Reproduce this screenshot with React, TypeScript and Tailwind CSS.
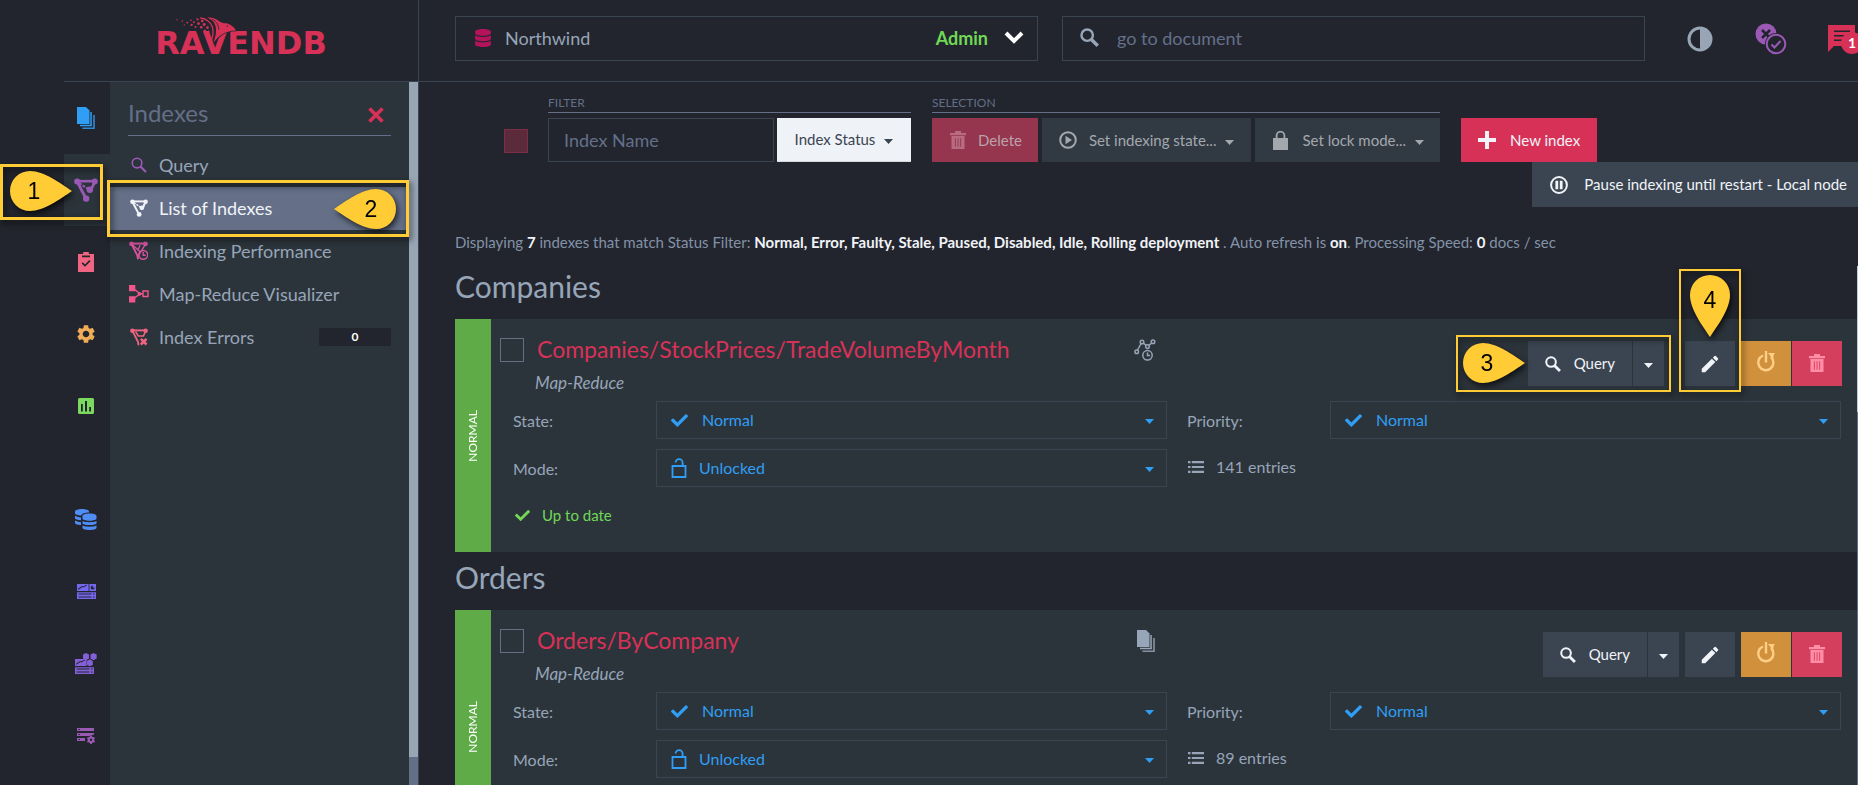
import { useState, ReactNode } from "react";
import { FaCheck, FaDatabase } from "react-icons/fa";
import { MdEdit, MdSettings } from "react-icons/md";

type IconProps = { className?: string };

type IndexInfo = {
  name: string;
  collection: string;
  entries: number;
  timeSeries: boolean;
  callouts: boolean;
};

const INDEXES: IndexInfo[] = [
  { name: "Companies/StockPrices/TradeVolumeByMonth", collection: "Companies", entries: 141, timeSeries: true,  callouts: true  },
  { name: "Orders/ByCompany",                         collection: "Orders",    entries: 89,  timeSeries: false, callouts: false },
];

/* ---------- icons ---------- */

function DocumentsIcon({ className }: IconProps) {
  return (
    <svg viewBox="0 0 18 22" className={className} fill="currentColor" aria-hidden="true">
      <path d="M0 0h9l3.5 3.5V17H0z" />
      <path d="M13.3 5h1.5v14.2H3V17.8h10.3z" />
      <path d="M16.2 8h1.6v14H5.4v-1.4h10.8z" opacity=".85" />
    </svg>
  );
}

function SearchIcon({ className, thin }: IconProps & { thin?: boolean }) {
  return (
    <svg viewBox="0 0 18 18" className={className} fill="none" stroke="currentColor" aria-hidden="true">
      <circle cx="6.800" cy="6.800" r="5.400" strokeWidth={thin ? 1.8 : 2.3} />
      <path d="m10.600 10.600 6.200 6.200" strokeWidth={thin ? 2.4 : 3.2} />
    </svg>
  );
}

function IndexIcon({ className, badge }: IconProps & { badge?: "clock" | "error" }) {
  return (
    <svg viewBox="0 0 24 24" className={className} fill="none" stroke="currentColor" aria-hidden="true">
      <g fill="currentColor" stroke="none">
        <circle cx="3.2" cy="3.6" r="3" />
        <circle cx="20.8" cy="3.6" r="3" />
        {!badge && <circle cx="12.2" cy="20.6" r="3.2" />}
        {!badge && <circle cx="15.8" cy="11.8" r="3.2" />}
      </g>
      <path d="M3 3.2h18" strokeWidth="2.6" />
      {badge ? (
        <path d="M3.6 4.5 10.5 18l1 5" strokeWidth="2.4" />
      ) : (
        <path d="M3.6 4.5 12 20.5M20.400 4.500 17 12" strokeWidth="2.8" />
      )}
      {!badge && <path d="m5 5 10 6.5" strokeWidth="2" strokeDasharray="3 1.2" />}
      {badge === "clock" && (
        <>
          <path d="m4 4.5 10 9M20.4 4.5 10.5 21M14 5l-3 7" strokeWidth="1.7" />
          <circle cx="18" cy="17.5" r="5.6" strokeWidth="1.8" />
          <path d="M18 14v4h3" strokeWidth="1.6" />
        </>
      )}
      {badge === "error" && (
        <>
          <path d="M20.4 5 18 10.5h-7L7.5 5" strokeWidth="2" />
          <path d="m14.5 14.5 7.5 7.5m0-7.5-7.5 7.5" strokeWidth="3.4" />
        </>
      )}
    </svg>
  );
}

function MapReduceIcon({ className }: IconProps) {
  return (
    <svg viewBox="0 0 20 18" className={className} aria-hidden="true">
      <path fill="currentColor" d="M0 0h6.3v6.3H0zM0 11.2h6.3v6.3H0z" />
      <g fill="none" stroke="currentColor" strokeWidth="1.4">
        <path d="m5 4 6 4.8L5 13.500M11 8.800h2.800" />
        <circle cx="10.500" cy="8.800" r="1.200" />
        <path d="M14 6h5v5.500h-5z" />
      </g>
    </svg>
  );
}

function TasksIcon({ className }: IconProps) {
  return (
    <svg viewBox="0 0 16 20" className={className} aria-hidden="true">
      <path fill="currentColor" fillRule="evenodd" d="M0 2h5a3 3 0 0 1 6 0h5v18H0zM4 3.500v1.800h8V3.500zM3.600 11.400l1.200-1.200 2.200 2.200 4.300-4.300 1.200 1.200L7 14.800z" />
    </svg>
  );
}

function StatsIcon({ className }: IconProps) {
  return (
    <svg viewBox="0 0 16 16" className={className} aria-hidden="true">
      <path fill="currentColor" fillRule="evenodd" d="M1.500 0h13A1.500 1.500 0 0 1 16 1.500v13a1.500 1.500 0 0 1-1.500 1.500h-13A1.500 1.500 0 0 1 0 14.500v-13A1.500 1.500 0 0 1 1.500 0zM3 6v7.500h1.800V6zM7 3v10.500h2V3zM11.200 9v4.500H13V9z" />
    </svg>
  );
}

function DatabasesIcon({ className }: IconProps) {
  return (
    <svg viewBox="0 0 22 21" className={className} aria-hidden="true">
      <g fill="currentColor">
        <path d="M0 2.500C0 1 3.200 0 7 0s7 1 7 2.500V3.500C10 3.500 6.800 4.600 6.300 6.500 3 6.400 0 5.600 0 4.300zM0 6.800c1.200.9 3.500 1.500 6 1.600v2.800C2.600 11 0 10.300 0 9.300zM0 11.600c1.200.9 3.500 1.500 6 1.600V16C2.600 15.900 0 15.200 0 14z" />
        <path d="M7.500 7C7.500 5.500 10.500 4.600 14.500 4.600s7 .9 7 2.400v2.600c0 1.300-3 2.200-7 2.200s-7-.9-7-2.200zM7.500 12c1.400.8 4 1.200 7 1.200s5.600-.4 7-1.200v2.200c0 1.100-3 1.900-7 1.900s-7-.8-7-1.900zM7.500 16.500c1.400.8 4 1.200 7 1.200s5.600-.4 7-1.200v2.200c0 1.300-3 2.300-7 2.300s-7-1-7-2.300z" />
      </g>
    </svg>
  );
}

function DashboardIcon({ className, cluster }: IconProps & { cluster?: boolean }) {
  return (
    <svg viewBox={cluster ? "0 -6 22 21" : "0 0 19 15"} className={className} aria-hidden="true">
      <path fill="currentColor" fillRule="evenodd" d="M0 0h11.600v7H0zM1.200 5.700l3.800-2.500h2l3-2v-.6L6.600 2.300h-2L1 4.800zM0 8.200h19V15H0zM1.500 9.500v1.100h13V9.500zM16 9.500v1.100h1.700V9.500zM1.500 12.400v1.200h13v-1.200zM16 12.400v1.200h1.700v-1.200z" />
      {cluster ? (
        <path fill="currentColor" d="m11-6 3 1.500v4l-3 1.700L8-.5v-4zM18.500-6l3.200 1.500v4l-3.200 1.700-3-1.700v-4zM14.800.300l3 1.700v4l-3 1.300-2.800-1.300V2z" />
      ) : (
        <path fill="currentColor" fillRule="evenodd" d="M12.400 0H19v7h-6.600zM15.700 1.500a2 2 0 1 0 2 2h-2z" />
      )}
    </svg>
  );
}

function ServerIcon({ className }: IconProps) {
  return (
    <svg viewBox="0 0 18 17" className={className} aria-hidden="true">
      <path fill="currentColor" fillRule="evenodd" d="M0 1h17v3H0zM1.500 2v1H3V2zM0 6h17v1.500L12 9H0zM1.500 7v1H3V7zM0 11h8v3H0zM1.500 12v1H3v-1z" />
      <circle cx="14" cy="12.800" r="2.200" fill="none" stroke="currentColor" strokeWidth="2" />
      <path stroke="currentColor" strokeWidth="1.800" strokeDasharray="1.800 4.800" d="M14 8.600v8.400M10.400 10.700l7.200 4.200M10.400 14.900l7.200-4.200" />
    </svg>
  );
}

function TrashIcon({ className }: IconProps) {
  return (
    <svg viewBox="0 0 16 18" className={className} aria-hidden="true">
      <path fill="currentColor" d="M5 0h6v2h5v2.200H0V2h5z" />
      <path fill="currentColor" fillRule="evenodd" d="M1.500 5h13v13h-13zM4.900 7.200v8.600h.9V7.200zM7.600 7.200v8.600h.9V7.200zM10.200 7.200v8.600h.9V7.200z" />
    </svg>
  );
}

function PlayIcon({ className }: IconProps) {
  return (
    <svg viewBox="0 0 18 18" className={className} aria-hidden="true">
      <circle cx="9" cy="9" r="7.800" fill="none" stroke="currentColor" strokeWidth="2" />
      <path fill="currentColor" d="M6.500 4.800 13 9l-6.500 4.200z" />
    </svg>
  );
}

function PauseIcon({ className }: IconProps) {
  return (
    <svg viewBox="0 0 18 18" className={className} aria-hidden="true">
      <circle cx="9" cy="9" r="7.900" fill="none" stroke="currentColor" strokeWidth="2" />
      <path fill="currentColor" d="M5.400 4.800h2.800v8.400H5.400zM9.800 4.800h2.800v8.400H9.800z" />
    </svg>
  );
}

function LockIcon({ className, open }: IconProps & { open?: boolean }) {
  return open ? (
    <svg viewBox="0 0 16 20" className={className} fill="none" stroke="currentColor" strokeWidth="1.800" aria-hidden="true">
      <path d="M1.500 8h13v11h-13z" />
      <path d="M4.600 4.600a3.500 3.500 0 0 1 7 0V8" />
    </svg>
  ) : (
    <svg viewBox="0 0 15 19" className={className} aria-hidden="true">
      <path fill="currentColor" d="M0 7h15v12H0z" />
      <path d="M3.600 8V4.600a3.900 3.900 0 0 1 7.800 0V8" fill="none" stroke="currentColor" strokeWidth="1.800" />
    </svg>
  );
}

function PowerIcon({ className }: IconProps) {
  return (
    <svg viewBox="0 0 20 21" className={className} fill="none" stroke="currentColor" aria-hidden="true">
      <path d="M7 4.500a7.600 7.600 0 1 0 8 1.500" strokeWidth="2.400" />
      <path d="M10 0v11.500" strokeWidth="2.400" />
      <path d="M12 2h7l-1.200 1.800-.8 4.700z" fill="currentColor" stroke="none" />
    </svg>
  );
}

function TimeSeriesIcon({ className }: IconProps) {
  return (
    <svg viewBox="0 0 22 22" className={className} fill="none" stroke="currentColor" strokeWidth="1.500" aria-hidden="true">
      <circle cx="2.700" cy="12.800" r="1.800" />
      <circle cx="8" cy="3" r="1.800" />
      <circle cx="13.500" cy="7.600" r="1.800" />
      <circle cx="19" cy="2.700" r="1.800" />
      <path d="m3.500 11 3.700-6.500M9.400 4.200l2.700 2.200M14.800 6.300l3-2.300" />
      <circle cx="13.500" cy="16.300" r="4.700" />
      <path d="M13.500 13.500v3h2.500" />
    </svg>
  );
}

function ListIcon({ className }: IconProps) {
  return (
    <svg viewBox="0 0 16 12" className={className} fill="currentColor" aria-hidden="true">
      <path d="M0 0h2.500v2.200H0zM3.800 0H16v2.200H3.800zM0 4.900h2.500v2.200H0zM3.800 4.900H16v2.200H3.800zM0 9.800h2.500V12H0zM3.800 9.800H16V12H3.800z" />
    </svg>
  );
}

function ContrastIcon({ className }: IconProps) {
  return (
    <svg viewBox="0 0 26 26" className={className} aria-hidden="true">
      <circle cx="13" cy="13" r="11" fill="none" stroke="currentColor" strokeWidth="3" />
      <path fill="currentColor" d="M13 2a11 11 0 0 1 0 22z" />
    </svg>
  );
}

function TasksStatusIcon({ className }: IconProps) {
  return (
    <svg viewBox="0 0 32 32" className={className} fill="none" aria-hidden="true">
      <circle cx="11" cy="11" r="10.500" fill="currentColor" />
      <path d="m7 7 8 8m0-8-8 8" stroke="#22252d" strokeWidth="2.500" />
      <circle cx="21" cy="21" r="11" fill="#22252d" />
      <circle cx="21" cy="21" r="9.300" stroke="currentColor" strokeWidth="2" />
      <path d="m16.500 21.500 3 3 6-6.500" stroke="currentColor" strokeWidth="2" />
    </svg>
  );
}

function MessageIcon({ className }: IconProps) {
  return (
    <svg viewBox="0 0 27 27" className={className} aria-hidden="true">
      <path fill="currentColor" fillRule="evenodd" d="M0 0h27v21H6l-6 6zM6 5.500v1.600h16V5.500zM6 10v1.600h16V10zM6 14.500v1.600h16v-1.600z" />
    </svg>
  );
}

function CloseIcon({ className }: IconProps) {
  return (
    <svg viewBox="0 0 16 16" className={className} stroke="currentColor" strokeWidth="3.600" aria-hidden="true">
      <path d="m1.500 1.500 13 13m0-13-13 13" />
    </svg>
  );
}

function PlusIcon({ className }: IconProps) {
  return (
    <svg viewBox="0 0 18 18" className={className} stroke="currentColor" strokeWidth="4" aria-hidden="true">
      <path d="M9 0v18M0 9h18" />
    </svg>
  );
}

function ChevronIcon({ className }: IconProps) {
  return (
    <svg viewBox="0 0 20 13" className={className} fill="none" stroke="currentColor" strokeWidth="4" aria-hidden="true">
      <path d="m2 2 8 8 8-8" />
    </svg>
  );
}

function Caret({ className = "" }: IconProps) {
  return (
    <svg viewBox="0 0 9 5" className={`h-[5px] w-[9px] shrink-0 ${className}`} aria-hidden="true">
      <path fill="currentColor" d="M0 0h9L4.500 5z" />
    </svg>
  );
}

function Logo() {
  return (
    <a href="#" className="relative block font-['DejaVu_Sans'] text-[32px] leading-[30px] font-bold text-[#d83157]">
      RAVENDB
      <svg viewBox="84 20 190 88" className="absolute bottom-[13px] left-[20px] w-[63px]" aria-hidden="true">
        <path
          fill="currentColor"
          stroke="#22252d"
          strokeWidth="4"
          paintOrder="stroke"
          d="M268 67c-5-10-14-18-28-22-12 0-20-3-28-10-10-7-21-9-31-7 16 5 25 17 26 33 1 14-2 28-7 43 7-10 14-18 24-24 12-8 28-13 44-13z"
        />
        <path fill="none" stroke="currentColor" strokeWidth="4" d="M160 29c16 1 32 12 37 27 3 14 2 27-3 40" />
        <path fill="none" stroke="#22252d" strokeWidth="2.500" d="M182 31c20 7 28 24 22 52M196 32c14 9 19 17 20 32" />
        <circle cx="242" cy="53" r="2" fill="#22252d" />
        <g fill="currentColor">
          <circle cx="90" cy="34" r="2" />
          <circle cx="106" cy="38" r="2.500" />
          <circle cx="112" cy="50" r="2" />
          <circle cx="121" cy="43" r="3" />
          <circle cx="132" cy="36" r="2.500" />
          <circle cx="134" cy="50" r="3.500" />
          <circle cx="141" cy="42" r="3" />
          <circle cx="146" cy="56" r="3" />
          <circle cx="152" cy="33" r="3.500" />
          <circle cx="155" cy="46" r="4" />
          <circle cx="163" cy="57" r="4" />
          <circle cx="166" cy="38" r="4" />
          <circle cx="172" cy="49" r="4.500" />
          <circle cx="174" cy="67" r="3.500" />
          <circle cx="182" cy="58" r="4" />
          <circle cx="185" cy="70" r="3" />
        </g>
      </svg>
    </a>
  );
}

/* ---------- callouts ---------- */

const PIN = "M62 20C50 12 34 0 20 0a20 20 0 0 0 0 40c14 0 30-12 42-20z";

function Pin({ label, dir, className = "" }: { label: string; dir: "right" | "left" | "down"; className?: string }) {
  const down = dir === "down";
  const turn = dir === "left" ? "rotate(180 31 20)" : down ? "matrix(0 1 -1 0 40 0)" : undefined;
  const x = down ? 20 : dir === "left" ? 37 : 24;
  return (
    <svg
      viewBox={down ? "0 0 40 62" : "0 0 62 40"}
      className={`absolute overflow-visible ${down ? "h-[62px] w-[40px]" : "h-[40px] w-[62px]"} ${className}`}
    >
      <path d={PIN} transform={turn} fill="#ffcc35" />
      <text x={x} y={down ? 33 : 28} textAnchor="middle" fill="#000" className="font-['Liberation_Sans'] text-[23px]">
        {label}
      </text>
    </svg>
  );
}

function Callout({ className, children }: { className: string; children: ReactNode }) {
  return (
    <div className={`pointer-events-none absolute z-10 border-[#ffcc35] drop-shadow-[2px_3px_3px_rgba(0,0,0,0.7)] ${className}`}>
      {children}
    </div>
  );
}

/* ---------- sidebar ---------- */

const RAIL_TOP = [
  { label: "Documents", icon: <DocumentsIcon className="h-[22px] text-[#2f9ef4]" /> },
  { label: "Indexes",   icon: <IndexIcon className="h-[24px] text-[#9b59b6]" /> },
  { label: "Tasks",     icon: <TasksIcon className="h-[20px] text-[#f06582]" /> },
  { label: "Settings",  icon: <MdSettings className="size-[22px] text-[#f0ad58]" /> },
  { label: "Stats",     icon: <StatsIcon className="h-[16px] text-[#7bd960]" /> },
];

const RAIL_BOTTOM = [
  { label: "Databases",         icon: <DatabasesIcon className="h-[21px] text-[#4f8df5]" /> },
  { label: "Server dashboard",  icon: <DashboardIcon className="h-[15px] text-[#7468ee]" /> },
  { label: "Cluster dashboard", icon: <DashboardIcon cluster className="h-[21px] text-[#8460d8]" /> },
  { label: "Manage server",     icon: <ServerIcon className="h-[17px] text-[#9b59b6]" /> },
];

const MENU = [
  { label: "Query",                 icon: <SearchIcon thin className="h-[16px] text-[#9b59b6]" /> },
  { label: "List of Indexes",       icon: <IndexIcon className="h-[18px]" /> },
  { label: "Indexing Performance",  icon: <IndexIcon badge="clock" className="h-[19px] text-[#d9549f]" /> },
  { label: "Map-Reduce Visualizer", icon: <MapReduceIcon className="h-[18px] text-[#f0568c]" /> },
  { label: "Index Errors",          icon: <IndexIcon badge="error" className="h-[18px] text-[#f06582]" /> },
];

function Sidebar() {
  return (
    <aside className="flex w-[419px] shrink-0 flex-col border-r border-[#3b4551]">
      <div className="flex h-[82px] shrink-0 pl-16">
        <div className="flex flex-1 items-center justify-center border-b border-[#3b4551] pt-1">
          <Logo />
        </div>
      </div>
      <div className="flex min-h-0 flex-1">
        <nav aria-label="Main" className="ml-16 w-[46px] shrink-0">
          {RAIL_TOP.map((item) => (
            <div key={item.label} className={`relative h-[72px] ${item.label === "Indexes" ? "bg-[#2c343b]" : ""}`}>
              <a href="#" aria-label={item.label} className="flex h-full items-center justify-center pr-[2px]">
                {item.icon}
              </a>
              {item.label === "Indexes" && (
                <Callout className="top-[10px] -left-16 h-[56px] w-[103px] border-3">
                  <Pin label="1" dir="right" className="top-[4px] left-[7px]" />
                </Callout>
              )}
            </div>
          ))}
          <div className="mt-[41px]">
            {RAIL_BOTTOM.map((item) => (
              <a key={item.label} href="#" aria-label={item.label} className="flex h-[72px] items-center justify-center pr-[2px]">
                {item.icon}
              </a>
            ))}
          </div>
        </nav>

        <div className="flex-1 bg-[#2c343b]">
          <div className="mx-[18px] flex h-[54px] items-center justify-between border-b border-[#636f87] pt-2 pr-[7px]">
            <h2 className="text-2xl text-[#636f87]">Indexes</h2>
            <button type="button" aria-label="Close" className="mt-1 text-[#d83157]">
              <CloseIcon className="size-4" />
            </button>
          </div>
          <ul className="mt-2 text-lg text-[#97a5b8]">
            {MENU.map((item) => (
              <li key={item.label} className="relative">
                <a
                  href="#"
                  className={`flex h-[43px] items-center pr-[18px] pb-[2px] pl-[18px] ${
                    item.label === "List of Indexes" ? "bg-[#657088] text-[#f0f3f7]" : ""
                  }`}
                >
                  <span className="mr-[10px] flex w-[21px] justify-center">{item.icon}</span>
                  {item.label}
                  {item.label === "Index Errors" && (
                    <span className="ml-auto w-[72px] rounded-xs bg-[#22252d] text-center text-xs leading-[18px] font-bold text-white">
                      0
                    </span>
                  )}
                </a>
                {item.label === "List of Indexes" && (
                  <Callout className="-top-[7px] right-0 -left-[3px] h-[57px] border-3">
                    <Pin label="2" dir="left" className="top-[6px] right-[10px]" />
                  </Callout>
                )}
              </li>
            ))}
          </ul>
        </div>
        <div className="flex w-[9px] flex-col bg-[#636f87] pb-7">
          <div className="flex-1 bg-[#97a5b5]" />
        </div>
      </div>
    </aside>
  );
}

/* ---------- header ---------- */

function Header() {
  const [query, setQuery] = useState("");
  return (
    <header className="flex h-[82px] shrink-0 items-start border-b border-[#3b4551] pt-4 pl-[36px]">
      <div className="grid h-[45px] flex-1 grid-cols-2 gap-6 text-lg">
        <button type="button" className="flex items-center border border-[#3b4551] pr-[13px] pb-[2px] pl-[19px] text-[#97a5b8]">
          <FaDatabase className="mr-[14px] h-[18px] w-[16px] text-[#b5145c]" />
          Northwind
          <span className="mr-4 ml-auto font-bold text-[#70d856]">Admin</span>
          <ChevronIcon className="w-5 text-white" />
        </button>
        <div className="flex items-center border border-[#3b4551] pb-[2px] pl-[17px]">
          <SearchIcon className="size-[19px] shrink-0 text-[#97a5b8]" />
          <input
            type="text"
            aria-label="go to document"
            placeholder="go to document"
            value={query}
            onChange={(e) => setQuery(e.target.value)}
            className="ml-[18px] min-w-0 flex-1 bg-transparent outline-none placeholder:text-[#64708a]"
          />
        </div>
      </div>
      <div className="flex h-[45px] w-[213px] shrink-0 items-center pl-[42px]">
        <button type="button" aria-label="Theme" className="text-[#97a5b5]">
          <ContrastIcon className="size-[26px]" />
        </button>
        <button type="button" aria-label="Tasks status" className="ml-[42px] text-[#9b59b6]">
          <TasksStatusIcon className="size-8" />
        </button>
        <button type="button" aria-label="Notifications" className="relative ml-[41px] h-[27px] w-[27px] shrink-0 text-[#d83157]">
          <MessageIcon className="size-[27px]" />
          <span className="absolute top-[7px] left-[13px] size-[22px] rounded-full bg-[#d83157] text-center text-sm leading-[22px] font-bold text-white">
            1
          </span>
        </button>
      </div>
    </header>
  );
}

/* ---------- toolbar ---------- */

function ToolGroup({ title, className, children }: { title: string; className: string; children: ReactNode }) {
  return (
    <div>
      <div className="mb-[5px] border-b border-[#636f87] text-xs leading-[18px] text-[#636f87] uppercase">{title}</div>
      <div className={`flex h-[44px] ${className}`}>{children}</div>
    </div>
  );
}

function Toolbar() {
  const [filter, setFilter] = useState("");
  return (
    <>
      <div className="flex items-end pt-3 pl-[85px]">
        <input
          type="checkbox"
          aria-label="Select all indexes"
          className="mr-5 mb-[9px] size-6 appearance-none border border-[#7d2e44] bg-[#5c2b3b]"
        />
        <ToolGroup title="Filter" className="gap-[3px]">
          <input
            type="text"
            aria-label="Index Name"
            placeholder="Index Name"
            value={filter}
            onChange={(e) => setFilter(e.target.value)}
            className="w-[226px] border border-[#3b4551] bg-transparent px-[15px] text-lg outline-none placeholder:text-[#64708a]"
          />
          <button type="button" className="flex w-[134px] items-center justify-center gap-[9px] border-b border-[#d5dadf] bg-[#eff3f7] text-[15px] text-[#3b4551]">
            Index Status
            <Caret className="mt-1" />
          </button>
        </ToolGroup>
        <div className="w-[21px]" />
        <ToolGroup title="Selection" className="gap-1 text-[15px] text-[#a3a8ad]">
          <button type="button" className="flex items-center gap-3 bg-[#96354e] pr-4 pl-[18px] text-[#b9a3ac]">
            <TrashIcon className="h-[18px] text-[#b76c80]" />
            Delete
          </button>
          <button type="button" className="flex items-center bg-[#313943] px-[17px]">
            <PlayIcon className="mr-3 h-[18px]" />
            Set indexing state...
            <Caret className="mt-1 ml-[9px]" />
          </button>
          <button type="button" className="flex items-center bg-[#313943] pr-4 pl-[18px]">
            <LockIcon className="mr-[14px] h-[19px]" />
            Set lock mode...
            <Caret className="mt-1 ml-[9px]" />
          </button>
        </ToolGroup>
        <button type="button" className="ml-[21px] flex h-[44px] items-center gap-[14px] bg-[#d83157] px-[17px] text-[15px] text-[#f0f3f7]">
          <PlusIcon className="h-[18px]" />
          New index
        </button>
      </div>
      <div className="flex justify-end">
        <button type="button" className="flex h-[45px] items-center gap-4 bg-[#3b4551] pr-[11px] pl-[18px] text-[15px] text-[#f0f3f7]">
          <PauseIcon className="h-[18px]" />
          Pause indexing until restart - Local node
        </button>
      </div>
    </>
  );
}

/* ---------- index cards ---------- */

function Picker({ id, value, icon, pad }: { id: string; value: string; icon: ReactNode; pad: string }) {
  return (
    <div className="relative flex h-[38px] flex-1 items-center text-[#2f9ef4]">
      <span className="pointer-events-none absolute left-[15px]">{icon}</span>
      <select id={id} defaultValue={value} className={`h-full w-full appearance-none border border-[#3b4551] bg-transparent pb-px text-base ${pad}`}>
        <option>{value}</option>
      </select>
      <Caret className="pointer-events-none absolute top-[18px] right-[13px]" />
    </div>
  );
}

function Row({ id, label, children }: { id: string; label: string; children: ReactNode }) {
  return (
    <div className="flex h-[38px] items-center">
      <label htmlFor={id} className="w-[143px] shrink-0 pt-px">{label}</label>
      {children}
    </div>
  );
}

function IndexCard({ index }: { index: IndexInfo }) {
  const key = index.collection.toLowerCase();
  return (
    <article className="flex bg-[#2c343b] text-base text-[#97a5b8]">
      <div className="flex w-[36px] shrink-0 items-center justify-center bg-[#5fab48]">
        <span className="rotate-180 text-xs text-white uppercase [writing-mode:vertical-rl]">Normal</span>
      </div>
      <div className="flex-1 pr-[17px] pb-[17px] pl-[22px]">
        <div className="-mr-px grid h-[82px] grid-cols-2 gap-5">
          <div className="-ml-[13px] pt-[18px]">
            <div className="flex h-[26px] items-center">
              <input type="checkbox" aria-label={`Select ${index.name}`} className="mr-[13px] size-6 shrink-0 appearance-none border border-[#636f87]" />
              <a href="#" className="pb-[2px] text-[23px] leading-6 text-[#d83157]">{index.name}</a>
              <span className="mr-3 ml-auto">
                {index.timeSeries ? <TimeSeriesIcon className="h-[22px]" /> : <DocumentsIcon className="mr-px h-[22px]" />}
              </span>
            </div>
            <p className="mt-2 ml-[35px] text-[17px] leading-6 italic">Map-Reduce</p>
          </div>
          <div className="flex h-[67px] justify-end pt-[22px] text-[15px] text-[#f0f3f7]">
            <div className={`relative flex gap-px ${index.callouts ? "mr-[21px]" : "mr-[6px]"}`}>
              <button type="button" className="flex items-center gap-[13px] bg-[#3b4552] px-[17px]">
                <SearchIcon className="size-[16px]" />
                Query
              </button>
              <button type="button" aria-label="More queries" className="flex items-center bg-[#3b4552] px-[11px]">
                <Caret className="mt-1" />
              </button>
              {index.callouts && (
                <Callout className="-top-[6px] -right-[7px] -bottom-[6px] -left-[72px] border-2">
                  <Pin label="3" dir="right" className="top-[6px] left-[5px]" />
                </Callout>
              )}
            </div>
            <div className="relative mr-[6px] w-[50px]">
              <button type="button" aria-label="Edit index" className="flex h-full w-full items-center justify-center bg-[#3b4552]">
                <MdEdit className="size-[22px]" />
              </button>
              {index.callouts && (
                <Callout className="-top-[72px] -right-[6px] -bottom-[6px] -left-[6px] border-2">
                  <Pin label="4" dir="down" className="top-[4px] left-[9px]" />
                </Callout>
              )}
            </div>
            <button type="button" aria-label="Restart index" className="mr-px flex w-[50px] items-center justify-center bg-[#d1913c] pb-1 text-[#ffcf87]">
              <PowerIcon className="h-[21px]" />
            </button>
            <button type="button" aria-label="Delete index" className="flex w-[50px] items-center justify-center bg-[#d43f5e] pb-px text-[#ff8da6]">
              <TrashIcon className="h-[18px]" />
            </button>
          </div>
        </div>

        <div className="grid grid-cols-2 gap-x-5 gap-y-[10px]">
          <Row id={`${key}-state`} label="State:">
            <Picker id={`${key}-state`} value="Normal" icon={<FaCheck className="size-[17px]" />} pad="pl-[45px]" />
          </Row>
          <Row id={`${key}-priority`} label="Priority:">
            <Picker id={`${key}-priority`} value="Normal" icon={<FaCheck className="size-[17px]" />} pad="pl-[45px]" />
          </Row>
          <Row id={`${key}-mode`} label="Mode:">
            <Picker id={`${key}-mode`} value="Unlocked" icon={<LockIcon open className="h-[20px]" />} pad="pl-[42px]" />
          </Row>
          <div className="flex h-[38px] items-center gap-3 pb-[2px] pl-px">
            <ListIcon className="h-[12px]" />
            {index.entries} entries
          </div>
          <div className="flex h-[38px] items-center gap-3 pb-[2px] pl-[2px] text-[15px] text-[#70d856]">
            <FaCheck className="size-[15px]" />
            Up to date
          </div>
        </div>
      </div>
    </article>
  );
}

export default function App() {
  return (
    <div className="flex h-screen overflow-hidden bg-[#22252d] font-[Lato,'Open_Sans',sans-serif]">
      <Sidebar />
      <div className="flex min-w-0 flex-1 flex-col">
        <Header />
        <main className="relative min-h-0 flex-1 overflow-hidden">
          <Toolbar />
          <div className="pl-[36px]">
            <p className="mt-[23px] pb-[7px] text-[15px] leading-6 text-[#8392a7] [&_b]:text-[#f0f3f7]">
              Displaying <b>7</b> indexes that match Status Filter:{" "}
              <b>Normal, Error, Faulty, Stale, Paused, Disabled, Idle, Rolling deployment</b> . Auto refresh is <b>on</b>.
              Processing Speed: <b>0</b> docs / sec
            </p>
            {INDEXES.map((index) => (
              <section key={index.name}>
                <h3 className="mt-[7px] mb-[15px] text-3xl leading-9 text-[#97a5b8]">{index.collection}</h3>
                <IndexCard index={index} />
              </section>
            ))}
          </div>
          <div className="absolute top-[184px] right-0 bottom-0 w-px bg-[#636f87]">
            <div className="h-[146px] bg-[#c3ccd6]" />
          </div>
        </main>
      </div>
    </div>
  );
}
